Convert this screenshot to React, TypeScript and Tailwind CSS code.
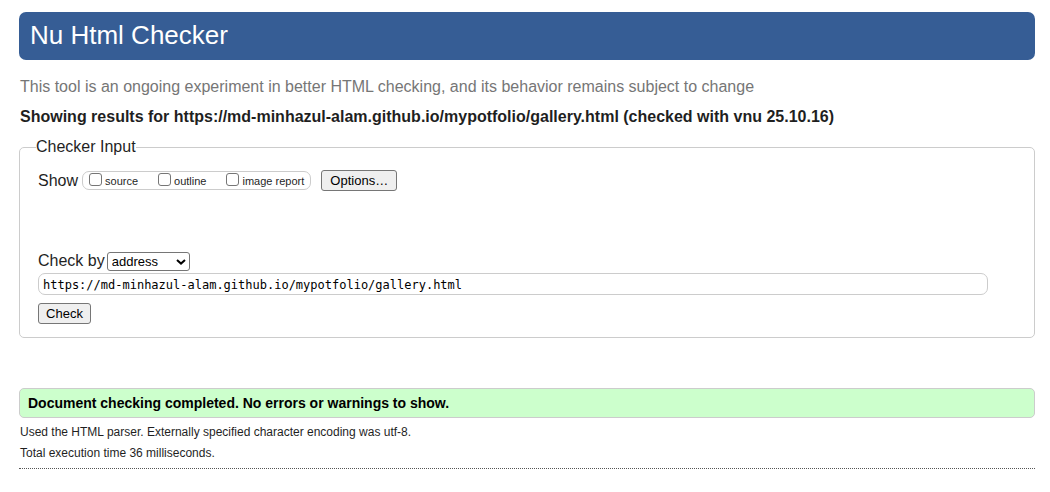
import { useState } from 'react';

const SHOW_OPTIONS = ['source', 'outline', 'image report'];
const METHODS = ['address', 'file upload', 'text input'];
const DOCUMENT_URL = 'https://md-minhazul-alam.github.io/mypotfolio/gallery.html';

const buttonClass =
  'h-[21px] rounded-[3px] border border-[#767676] bg-[#efefef] text-[13px] leading-4 text-black';

function ShowOption({ name }: { name: string }) {
  return (
    <label className="flex items-center gap-[3px] text-[11px] leading-4">
      <input
        type="checkbox"
        className="mb-[3px] size-[13px] appearance-none rounded-[3px] border border-[#767676] bg-white checked:bg-[#0075ff]"
      />
      <span className="pt-px">{name}</span>
    </label>
  );
}

function CheckerForm() {
  const [url, setUrl] = useState(DOCUMENT_URL);

  return (
    <form onSubmit={(event) => event.preventDefault()}>
      <fieldset className="mt-2 min-w-0 rounded-[5px] border border-[#ccc] pr-[46px] pb-[13px] pl-[18px]">
        <legend className="-mt-px ml-[-2px] h-6 text-base leading-6">Checker Input</legend>

        <div className="flex flex-wrap items-center pt-[11px]">
          <span className="leading-5">Show</span>
          <div className="ml-1 flex h-[19px] items-center gap-5 rounded-[7px] border border-[#ccc] px-1.5">
            {SHOW_OPTIONS.map((name) => (
              <ShowOption key={name} name={name} />
            ))}
          </div>
          <button type="button" className={`${buttonClass} ml-2.5 w-[76px]`}>
            Options…
          </button>
        </div>

        <div className="mt-[60px] flex items-center gap-[2px]">
          <label htmlFor="method" className="leading-5">
            Check by
          </label>
          <div className="relative flex">
            <select
              id="method"
              className="h-[19px] w-[83px] appearance-none rounded-[3px] border border-[#767676] bg-white pt-px pl-1 text-[13px] leading-4 text-black"
            >
              {METHODS.map((method) => (
                <option key={method}>{method}</option>
              ))}
            </select>
            <svg
              viewBox="0 0 10 6"
              className="pointer-events-none absolute top-[7px] right-1 h-1.5 w-2.5"
              fill="none"
              stroke="black"
              strokeWidth="2"
              aria-hidden="true"
            >
              <path d="M1 1l4 3.6L9 1" />
            </svg>
          </div>
        </div>

        <input
          type="url"
          aria-label="Address of page to check"
          value={url}
          onChange={(event) => setUrl(event.target.value)}
          spellCheck={false}
          className="mt-[2px] block h-[22px] w-full rounded-[7px] border border-[#ccc] bg-white px-1 pt-0.5 font-['DejaVu_Sans_Mono',monospace] text-[12px] text-black"
        />
        <button type="submit" className={`${buttonClass} mt-2 block w-[53px]`}>
          Check
        </button>
      </fieldset>
    </form>
  );
}

export default function App() {
  return (
    <div className="min-h-screen bg-white pt-3 pr-[15px] pb-5 pl-[19px] font-['Liberation_Sans',Arial,sans-serif] text-base text-[#1f1f1f]">
      <header className="flex h-12 items-center rounded-[7px] bg-[#365d95] px-[11px] pb-0.5">
        <h1 className="text-[26px] leading-8 text-white">Nu Html Checker</h1>
      </header>
      <main>
        <p className="mt-[17px] pl-px leading-5 text-[#767676]">
          This tool is an ongoing experiment in better HTML checking, and its behavior remains
          subject to change
        </p>
        <h2 className="mt-2.5 pl-px leading-5 font-bold">
          Showing results for {DOCUMENT_URL} (checked with vnu 25.10.16)
        </h2>
        <CheckerForm />
        <section className="mt-[50px]">
          <p className="rounded-[5px] border border-[#ccc] bg-[#cfc] px-2 py-1 text-sm leading-5 font-bold text-black">
            Document checking completed. No errors or warnings to show.
          </p>
          <div className="border-b border-dotted border-[#555] pt-1 pb-1 pl-px text-xs leading-[21px]">
            <p>Used the HTML parser. Externally specified character encoding was utf-8.</p>
            <p>Total execution time 36 milliseconds.</p>
          </div>
        </section>
      </main>
    </div>
  );
}
